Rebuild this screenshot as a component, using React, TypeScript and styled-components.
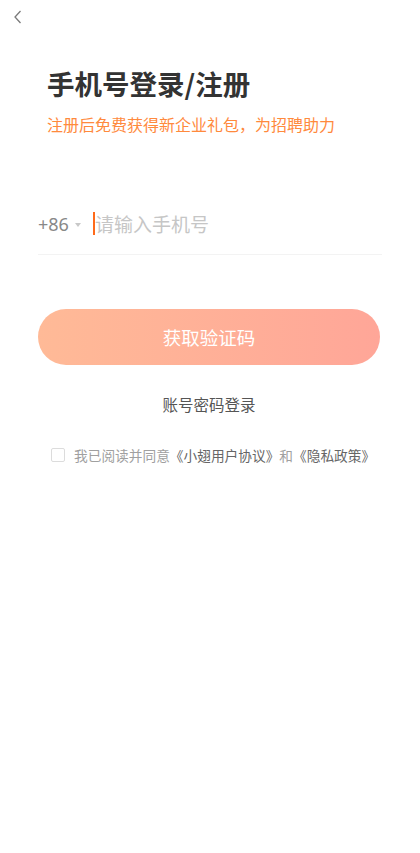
import React from "react";
import styled, { createGlobalStyle } from "styled-components";

const Global = createGlobalStyle`
  html, body { margin: 0; padding: 0; background: #fff; }
  body { font-family: "Noto Sans CJK SC", "Noto Sans", sans-serif; }
  * { box-sizing: border-box; }
`;

const Page = styled.div`
  width: 420px;
  height: 853px;
  background: #fff;
  display: flex;
  flex-direction: column;
`;

const TopBar = styled.div`
  height: 34px;
  padding: 9px 0 0 12px;
`;

const BackBtn = styled.div`
  width: 12px;
  height: 16px;
  display: flex;
`;

const Content = styled.div`
  padding: 0 38px;
  display: flex;
  flex-direction: column;
`;

const Title = styled.h1`
  margin: 30px 0 0 9px;
  font-size: 27.5px;
  line-height: 38px;
  font-weight: 700;
  color: #333;
`;

const Subtitle = styled.p`
  margin: 11px 0 0 9px;
  font-size: 16px;
  line-height: 22px;
  color: #ff8a3d;
`;

const PhoneRow = styled.div`
  margin-top: 62px;
  height: 58px;
  display: flex;
  align-items: center;
  border-bottom: 1px solid #f3f3f3;
  padding-bottom: 4px;
`;

const Code = styled.span`
  font-size: 18px;
  color: #888;
  font-family: "Noto Sans", sans-serif;
`;

const Caret = styled.span`
  width: 0;
  height: 0;
  border-left: 3.5px solid transparent;
  border-right: 3.5px solid transparent;
  border-top: 4px solid #c8c8c8;
  margin: 2px 0 0 6px;
`;

const Cursor = styled.span`
  width: 2px;
  height: 23px;
  background: #ff6a1a;
  margin-left: 12px;
`;

const Placeholder = styled.span`
  font-size: 19px;
  color: #c6c6c6;
`;

const MainButton = styled.button`
  margin-top: 54px;
  width: 342px;
  height: 56px;
  border: none;
  border-radius: 28px;
  background: linear-gradient(90deg, #ffba97 0%, #ffa698 100%);
  color: #fff;
  font-size: 18.5px;
  font-family: inherit;
  display: flex;
  align-items: center;
  justify-content: center;
`;

const LinkText = styled.div`
  margin-top: 26px;
  width: 342px;
  text-align: center;
  font-size: 15.5px;
  color: #555;
  line-height: 26px;
`;

const AgreeRow = styled.div`
  margin-top: 28px;
  margin-left: 13px;
  display: flex;
  align-items: center;
`;

const Check = styled.span`
  width: 14px;
  height: 14px;
  border: 1px solid #dcdcdc;
  border-radius: 2px;
`;

const AgreeText = styled.span`
  margin-left: 9px;
  font-size: 13.7px;
  color: #a0a0a0;
  white-space: nowrap;
`;

const Strong = styled.span`
  color: #666;
`;

export default function App() {
  return (
    <Page>
      <Global />
      <TopBar>
        <BackBtn>
          <svg width="12" height="16" viewBox="0 0 12 16">
            <path d="M8.5 2 L3 8 L8.5 14" fill="none" stroke="#7a7a7a" strokeWidth="1.3" />
          </svg>
        </BackBtn>
      </TopBar>
      <Content>
        <Title>手机号登录/注册</Title>
        <Subtitle>注册后免费获得新企业礼包，为招聘助力</Subtitle>
        <PhoneRow>
          <Code>+86</Code>
          <Caret />
          <Cursor />
          <Placeholder>请输入手机号</Placeholder>
        </PhoneRow>
        <MainButton>获取验证码</MainButton>
        <LinkText>账号密码登录</LinkText>
        <AgreeRow>
          <Check />
          <AgreeText>
            我已阅读并同意<Strong>《小翅用户协议》</Strong>和<Strong>《隐私政策》</Strong>
          </AgreeText>
        </AgreeRow>
      </Content>
    </Page>
  );
}
